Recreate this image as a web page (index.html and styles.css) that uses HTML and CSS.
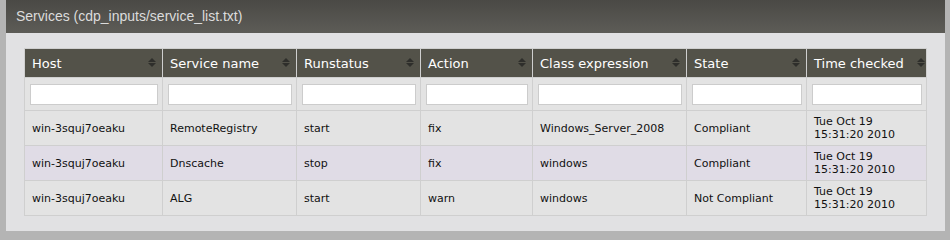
FILE: index.html
```html
<!DOCTYPE html>
<html lang="en">
<head>
    <meta charset="UTF-8">
    <title>Services</title>
    <link rel="stylesheet" href="styles.css">
</head>
<body>
    <div class="panel">
        <!-- Title bar -->
        <div class="panel-title">Services (cdp_inputs/service_list.txt)</div>

        <div class="panel-body">
            <table class="services">
                <colgroup>
                    <col class="c-host">
                    <col class="c-service">
                    <col class="c-run">
                    <col class="c-action">
                    <col class="c-class">
                    <col class="c-state">
                    <col class="c-time">
                </colgroup>
                <thead>
                    <tr class="head-row">
                        <th><span>Host</span><i class="sort"></i></th>
                        <th><span>Service name</span><i class="sort"></i></th>
                        <th><span>Runstatus</span><i class="sort"></i></th>
                        <th><span>Action</span><i class="sort"></i></th>
                        <th><span>Class expression</span><i class="sort"></i></th>
                        <th><span>State</span><i class="sort"></i></th>
                        <th><span>Time checked</span><i class="sort"></i></th>
                    </tr>
                    <tr class="filter-row">
                        <td><input type="text"></td>
                        <td><input type="text"></td>
                        <td><input type="text"></td>
                        <td><input type="text"></td>
                        <td><input type="text"></td>
                        <td><input type="text"></td>
                        <td><input type="text"></td>
                    </tr>
                </thead>
                <tbody>
                    <tr>
                        <td>win-3squj7oeaku</td>
                        <td>RemoteRegistry</td>
                        <td>start</td>
                        <td>fix</td>
                        <td>Windows_Server_2008</td>
                        <td>Compliant</td>
                        <td>Tue Oct 19 15:31:20 2010</td>
                    </tr>
                    <tr class="odd">
                        <td>win-3squj7oeaku</td>
                        <td>Dnscache</td>
                        <td>stop</td>
                        <td>fix</td>
                        <td>windows</td>
                        <td>Compliant</td>
                        <td>Tue Oct 19 15:31:20 2010</td>
                    </tr>
                    <tr>
                        <td>win-3squj7oeaku</td>
                        <td>ALG</td>
                        <td>start</td>
                        <td>warn</td>
                        <td>windows</td>
                        <td>Not Compliant</td>
                        <td>Tue Oct 19 15:31:20 2010</td>
                    </tr>
                </tbody>
            </table>
        </div>
    </div>
</body>
</html>
```

FILE: styles.css
```css
body {
    margin: 0;
    padding: 0 5px 8px 6px;
    background-color: #b4b4b4;
    font-family: 'DejaVu Sans', Verdana, sans-serif;
    color: #111;
}

/* Panel */
.panel {
    background-color: #e1e1e3;
}
.panel-title {
    height: 33px;
    line-height: 33px;
    padding-left: 10px;
    font-family: 'Liberation Sans', Arial, sans-serif;
    font-size: 14px;
    color: #dcdcdc;
    background: linear-gradient(#4a4945, #5d5c57);
}
.panel-body {
    padding: 15px 19px 15px 18px;
}

/* Table */
.services {
    width: 902px;
    table-layout: fixed;
    border-collapse: collapse;
    font-size: 11px;
}
.c-host { width: 138px; }
.c-service { width: 134px; }
.c-run { width: 124px; }
.c-action { width: 112px; }
.c-class { width: 154px; }
.c-state { width: 120px; }
.c-time { width: 120px; }

.services th,
.services td {
    border: 1px solid #cfcfcf;
    text-align: left;
}

.head-row th {
    position: relative;
    height: 28px;
    padding: 0 7px;
    background-color: #535249;
    border-color: #cfcfcf;
    color: #fff;
    font-size: 13px;
    font-weight: normal;
    white-space: nowrap;
}
.sort {
    position: absolute;
    right: 6px;
    top: 9px;
    width: 0;
    height: 0;
    border-left: 4px solid transparent;
    border-right: 4px solid transparent;
    border-bottom: 4px solid #2e2e2b;
}
.sort::after {
    content: "";
    position: absolute;
    left: -4px;
    top: 5px;
    border-left: 4px solid transparent;
    border-right: 4px solid transparent;
    border-top: 4px solid #2e2e2b;
}
.head-row th:last-child .sort {
    right: 1px;
}

.filter-row td {
    height: 32px;
    padding: 0 4px 0 5px;
    background-color: #e3e3e3;
}
.filter-row input {
    display: block;
    box-sizing: border-box;
    width: 100%;
    height: 21px;
    margin: 0;
    border: 1px solid #cccccc;
    background-color: #fff;
}

tbody td {
    height: 26px;
    padding: 4px 7px;
    line-height: 13px;
    background-color: #e3e3e3;
}
tbody tr.odd td {
    background-color: #e0dce6;
}
```
